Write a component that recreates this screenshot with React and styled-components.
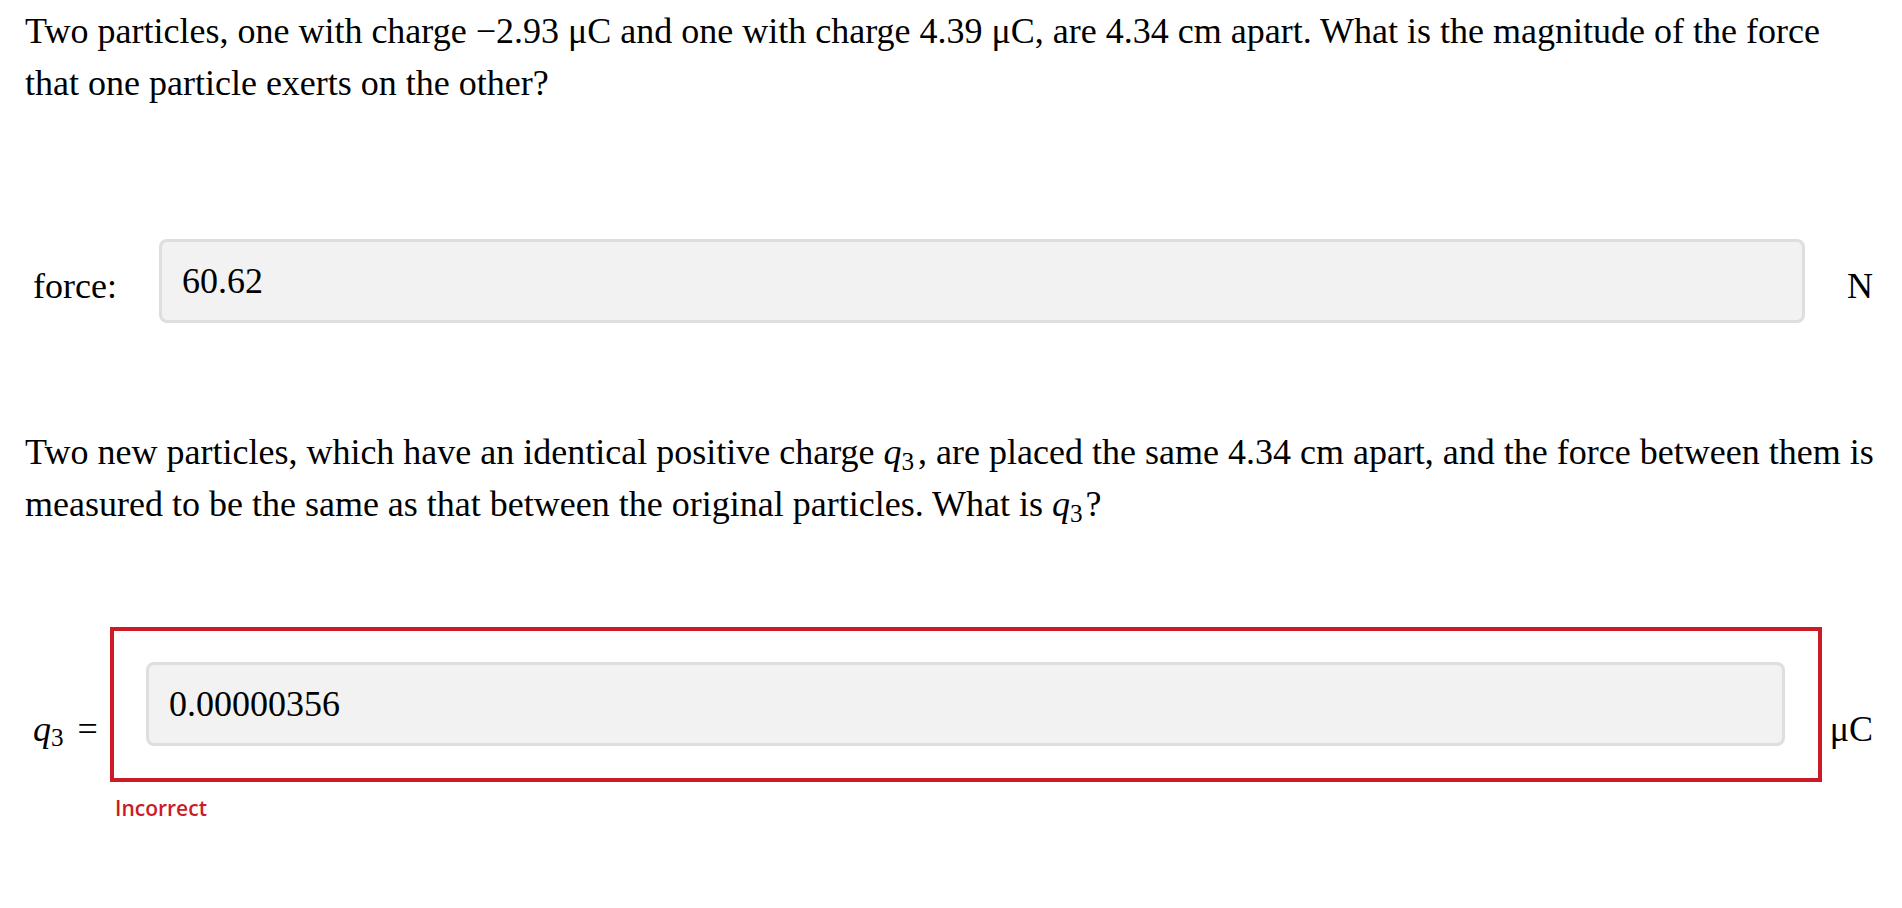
import React from "react";
import styled, { createGlobalStyle } from "styled-components";

const Global = createGlobalStyle`
  html, body { margin: 0; padding: 0; background: #fff; }
  body { font-family: "Liberation Serif", "Times New Roman", serif; color: #000; }
`;

const Page = styled.div`
  padding: 5px 20px 40px 25px;
  font-size: 36px;
  line-height: 52px;
`;

const Para = styled.p`
  margin: 0 0 ${(p) => p.$after}px 0;
`;

const Row = styled.div`
  display: flex;
  align-items: center;
  margin-bottom: ${(p) => p.$after || 0}px;
`;

const Label = styled.div`
  flex: 0 0 ${(p) => p.$w}px;
  box-sizing: border-box;
  padding-left: 8px;
  margin-top: ${(p) => p.$drop}px;
  line-height: normal;
  white-space: nowrap;
`;

const Unit = styled.div`
  flex: 0 0 ${(p) => p.$w}px;
  box-sizing: border-box;
  padding-right: 9px;
  text-align: right;
  margin-top: ${(p) => p.$drop}px;
  line-height: normal;
  white-space: nowrap;
`;

const Field = styled.input`
  flex: 1 1 auto;
  min-width: 0;
  box-sizing: border-box;
  height: 84px;
  border: 3px solid #dedede;
  border-radius: 8px;
  background: #f2f2f2;
  padding: 0 20px;
  font-family: "Liberation Serif", "Times New Roman", serif;
  font-size: 36px;
  color: #000;
  outline: none;
`;

const WrongBox = styled.div`
  flex: 1 1 auto;
  display: flex;
  box-sizing: border-box;
  border: 4px solid #cc1b27;
  padding: 31px 33px 32px 32px;
`;

const Feedback = styled.div`
  padding-left: 90px;
  margin-top: 12px;
  font-family: "Open Sans", "Noto Sans", sans-serif;
  font-weight: 600;
  font-size: 21px;
  line-height: 28px;
  color: #cc1b27;
`;

const Var = styled.span`
  font-style: italic;
`;

const Sub = styled.span`
  display: inline-block;
  font-size: 0.7em;
  vertical-align: -0.22em;
  line-height: 1;
  margin-right: ${(p) => p.$space || 0}px;
`;

const Eq = styled.span`
  margin-left: 14px;
`;

const Q3 = ({ space }) => (
  <>
    <Var>q</Var>
    <Sub $space={space}>3</Sub>
  </>
);

export default function App() {
  return (
    <>
      <Global />
      <Page>
        <Para $after={130}>
          Two particles, one with charge −2.93 μC and one with charge 4.39 μC,
          are 4.34 cm apart. What is the magnitude of the force that one
          particle exerts on the other?
        </Para>
        <Row $after={103}>
          <Label $w={134} $drop={10}>force:</Label>
          <Field readOnly defaultValue="60.62" />
          <Unit $w={77} $drop={10}>N</Unit>
        </Row>
        <Para $after={97}>
          Two new particles, which have an identical positive charge{" "}
          <Q3 space={4} />, are placed the same 4.34 cm apart, and the force
          between them is measured to be the same as that between the original
          particles. What is <Q3 space={3} />?
        </Para>
        <Row>
          <Label $w={85} $drop={49}>
            <Q3 />
            <Eq>=</Eq>
          </Label>
          <WrongBox>
            <Field readOnly defaultValue="0.00000356" />
          </WrongBox>
          <Unit $w={60} $drop={49}>μC</Unit>
        </Row>
        <Feedback>Incorrect</Feedback>
      </Page>
    </>
  );
}
